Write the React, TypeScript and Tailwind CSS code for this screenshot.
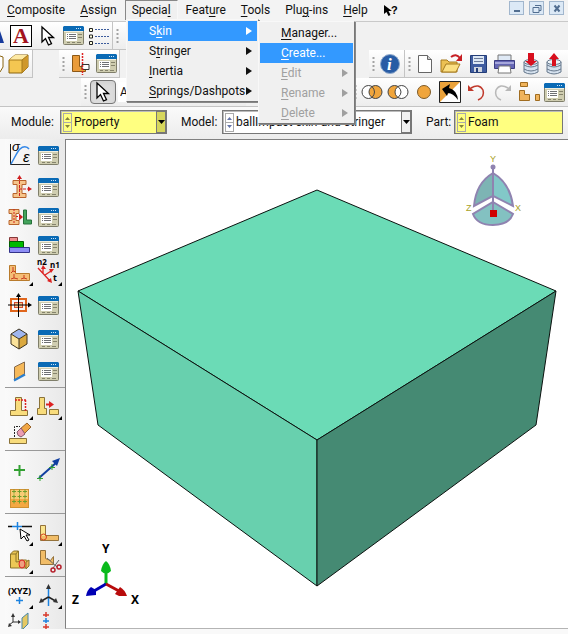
import React from "react";
import clsx from "clsx";

const menus = ["_Composite", "_Assign", "Specia_l", "Feat_ure", "_Tools", "Plu_g-ins", "_Help"];

const specialItems = ["S_kin", "S_tringer", "_Inertia", "_Springs/Dashpots"];

const skinItems = [
  { label: "_Manager...", disabled: false, sub: false },
  { label: "_Create...", disabled: false, sub: false },
  { label: "_Edit", disabled: true, sub: true },
  { label: "_Rename", disabled: true, sub: true },
  { label: "_Delete", disabled: true, sub: true },
];

// "_" marks the letter that is underlined
function Mnemonic({ text }: { text: string }) {
  const i = text.indexOf("_");
  return (
    <span className="whitespace-pre">
      {text.slice(0, i)}
      <span className="underline underline-offset-2">{text[i + 1]}</span>
      {text.slice(i + 2)}
    </span>
  );
}

function Icon({ w = 24, h = 24, children }: { w?: number; h?: number; children: React.ReactNode }) {
  return (
    <svg width={w} height={h} viewBox={`0 0 ${w} ${h}`} className="shrink-0 overflow-visible" fill="none" aria-hidden="true">
      {children}
    </svg>
  );
}

function ToolButton({ label, className, children }: { label: string; className?: string; children: React.ReactNode }) {
  return (
    <button type="button" aria-label={label} className={clsx("flex shrink-0 items-center justify-center", className)}>
      {children}
    </button>
  );
}

function Grip() {
  return (
    <Icon w={3} h={16}>
      <path d="M1.500 1v15" stroke="#a3a3a3" strokeWidth="2" strokeDasharray="2 2" />
    </Icon>
  );
}

const ManagerIcon = () => (
  <Icon w={21} h={19}>
    <rect x=".5" y="1.500" width="20" height="17" rx="1" fill="#cfcdb0" stroke="#7f7e6a" />
    <path d="M1 0h19l1 1v4H0V1z" fill="#0a6ab5" />
    <path d="M13 2.500h1m1 0h1m1 0h1" stroke="#cfe4f6" />
    <path d="M1 5.500h19" stroke="#efeee0" />
    <rect x="3" y="7" width="11" height="8" fill="#fff" />
    <path d="M4 8.500h1m1 0h7M4 10.500h1m1 0h7M4 12.500h1m1 0h7" stroke="#6e7075" />
    <path d="M15 8.500h4m-4 3h4M4 16.500h3m2 0h3m2 0h4" stroke="#85836c" />
  </Icon>
);

const CursorIcon = () => (
  <Icon w={14} h={20}>
    <path d="M1 1v15l3.500-3.500L7.500 19l3-1.300-3-6.200h5z" fill="#fff" stroke="#000" strokeWidth="1.300" />
  </Icon>
);

const Corner = () => <path d="M25 25v-4l-4 4z" fill="#000" />;

const CubeIcon = () => (
  <Icon w={21} h={20}>
    <path d="M1 6l6-5h13v12l-6 6H1z" fill="#f4c651" stroke="#8a6410" />
    <path d="M1 6l6-5h13l-6 5z" fill="#fde9a4" />
    <path d="M14 6l6-5v12l-6 6z" fill="#cf982b" />
    <path d="M1 6h13l6-5M14 6v13" stroke="#a67a1c" />
  </Icon>
);

const toolRows = [
  {
    h: "h-8",
    tools: [
      [
        "Create Material",
        <Icon key="i">
          <path d="M2.500 1v20.500H22" stroke="#222" />
          <path d="M3 21C7 14 9 9 12 6s7-3 9 0" stroke="#3488e8" strokeWidth="1.500" />
          <text x="4" y="8" className="fill-black font-['Liberation_Sans',sans-serif] text-[13px] italic">σ</text>
          <text x="15" y="19" className="fill-black font-['Liberation_Sans',sans-serif] text-[15px] italic">ε</text>
        </Icon>,
      ],
      ["Material Manager", <ManagerIcon key="i" />],
    ],
  },
  {
    h: "h-8",
    tools: [
      [
        "Create Section",
        <Icon key="i">
          <path d="M5 5.500h13v4h-4v9h4v4H5v-4h4v-9H5z" fill="#f6c58b" stroke="#b8622b" />
          <path d="M11.500 21V3M11 14h11" stroke="#d02020" strokeDasharray="3 1" />
          <path d="M9 4l2.500-4L14 4zM20 11.500l4 2.500-4 2.500z" fill="#d02020" />
        </Icon>,
      ],
      ["Section Manager", <ManagerIcon key="i" />],
    ],
  },
  {
    h: "h-7",
    tools: [
      [
        "Assign Section",
        <Icon key="i">
          <path d="M1 4.500h10v4H8v7h3v4H1v-4h3v-7H1z" fill="#f6c58b" stroke="#b8622b" />
          <path d="M6 4v15M8 11.500h4" stroke="#d02020" strokeDasharray="2 1" />
          <path d="M11 8.500l4 3.500-4 3.500z" fill="#d02020" />
          <path d="M15.500 5h3v10h5v4h-8z" fill="#43a45c" stroke="#27713b" />
        </Icon>,
      ],
      ["Section Assignment Manager", <ManagerIcon key="i" />],
    ],
  },
  {
    h: "h-7",
    tools: [
      [
        "Create Composite Layup",
        <Icon key="i">
          <path d="M1.500 4.500h8v4h-8z" fill="#ee8d8d" stroke="#843838" />
          <path d="M1.500 8.500h14v6h-14z" fill="#00b900" stroke="#006000" />
          <path d="M1.500 14.500h20v5h-20z" fill="#8d8df5" stroke="#33338a" />
        </Icon>,
      ],
      ["Composite Layup Manager", <ManagerIcon key="i" />],
    ],
  },
  {
    h: "h-7",
    tools: [
      [
        "Assign Material Orientation",
        <Icon key="i">
          <path d="M1.500 4.500h6v8h14v7h-20z" fill="#f5bd75" stroke="#b97b2c" />
          <path d="M5 10V6m0 4l-2 2m2-2l3 1M6 17v-4m0 4l-3 1m3-1l4 1M16 17v-3m0 3l-3 1m3-1l3 1" stroke="#c83b20" />
          <Corner />
        </Icon>,
      ],
      [
        "Assign Beam Orientation",
        <Icon key="i">
          <path d="M1 7l12 13M6 12V6M8 14l6-4" stroke="#d22" strokeWidth="1.300" />
          <path d="M15 22l-1-5-4 3zM4 8l2-4 3 4zM12 8l5 0-3 4z" fill="#d22" />
          <text x="0" y="4" className="fill-black font-['Noto_Sans',sans-serif] text-[8px] font-bold">n2</text>
          <text x="13" y="7" className="fill-black font-['Noto_Sans',sans-serif] text-[8px] font-bold">n1</text>
          <text x="16" y="20" className="fill-black font-['Noto_Sans',sans-serif] text-[9px] font-bold">t</text>
          <Corner />
        </Icon>,
      ],
    ],
  },
  {
    h: "h-9",
    tools: [
      [
        "Create Reference Orientation",
        <Icon key="i">
          <rect x="3" y="6" width="15" height="12" stroke="#e0661d" strokeWidth="2" />
          <rect x="6.500" y="9.500" width="8" height="5" fill="#f7c58d" stroke="#d04b2d" />
          <path d="M0 12h22M10.500 2v22" stroke="#000" />
          <path d="M8 4l2.500-4L13 4zM20 9.500l4 2.500-4 2.500z" fill="#000" />
        </Icon>,
      ],
      ["Orientation Manager", <ManagerIcon key="i" />],
    ],
  },
  {
    h: "h-8",
    tools: [
      [
        "Create Solid Skin",
        <Icon key="i">
          <path d="M3 7l8-5 8 5-8 5z" fill="#9fb6ef" />
          <path d="M3 7l8 5v10l-8-5z" fill="#fae29a" />
          <path d="M19 7l-8 5v10l8-5z" fill="#dba93f" />
          <path d="M3 7l8-5 8 5v10l-8 5-8-5zM3 7l8 5 8-5M11 12v10" stroke="#3c3320" />
        </Icon>,
      ],
      ["Skin Manager", <ManagerIcon key="i" />],
    ],
  },
  {
    h: "h-8",
    tools: [
      [
        "Create Shell",
        <Icon key="i">
          <path d="M6.500 8l10-5v12l-10 6z" fill="#f6b95a" stroke="#85694b" />
          <path d="M6 21.500l11-6" stroke="#2a7fcf" strokeWidth="2" />
        </Icon>,
      ],
      ["Shell Manager", <ManagerIcon key="i" />],
    ],
  },
] as { h: string; tools: [string, React.ReactNode][] }[];

const toolSections = [
  [
    [
      "Extend Part",
      <Icon key="i">
        <path d="M7.500 2.500h6v13h6v5h-17v-5h5z" fill="#f8dc7c" stroke="#8a733a" />
        <path d="M7 5h12M17.500 5v11" stroke="#d22" strokeDasharray="2 1" strokeWidth="1.500" />
        <Corner />
      </Icon>,
    ],
    [
      "Offset Faces",
      <Icon key="i">
        <path d="M2.500 2.500h5v11h2v6h-9v-6h2zM12.500 14.500h9v5h-9z" fill="#f8dc7c" stroke="#8a733a" />
        <path d="M9 9.500h4" stroke="#d22" strokeWidth="2" />
        <path d="M12 6l5 3.500-5 3.500z" fill="#d22" />
        <Corner />
      </Icon>,
    ],
    [
      "Remove Faces",
      <Icon key="i">
        <path d="M6.500 14V3.500H12" stroke="#222" strokeDasharray="2 1" />
        <path d="M1.500 15.500h17v5h-17z" fill="#f8dc7c" stroke="#8a733a" />
        <path d="M12 6l7-6 4 4-8 8z" fill="#f0a645" stroke="#97622b" />
        <path d="M9 9l4-4 4 6-4 3q-4-1-4-5z" fill="#ec9db3" stroke="#85596b" />
      </Icon>,
    ],
  ],
  [
    [
      "Create Datum Point",
      <Icon key="i">
        <path d="M6 12h11M11.500 7v11" stroke="#32a032" strokeWidth="2" />
      </Icon>,
    ],
    [
      "Create Datum Axis",
      <Icon key="i">
        <path d="M2 20L20 4" stroke="#103fa0" strokeWidth="2" />
        <path d="M23 0l-8 3 5 5z" fill="#103fa0" />
        <path d="M0 20.500h6M3 17v6M12 9.500h6M15 6v6" stroke="#32a032" />
      </Icon>,
    ],
    [
      "Partition Cell",
      <Icon key="i">
        <rect x="2.500" y="3.500" width="18" height="18" fill="#f4a843" stroke="#cf9133" />
        <path d="M3 4h17v9H3z" fill="#f8cc74" />
        <path d="M4 5.500h4m1.500 0h4m1.500 0h4M4 10.500h4m1.500 0h4m1.500 0h4M4 15.500h4m1.500 0h4m1.500 0h4M6 3.500v4m0 1v4m0 1v4M11.500 3.500v4m0 1v4m0 1v4M17 3.500v4m0 1v4m0 1v4" stroke="#6f9d2c" />
      </Icon>,
    ],
  ],
  [
    [
      "Partition Edge",
      <Icon key="i">
        <path d="M0 5.500h4m10 0h10" stroke="#111" strokeWidth="1.500" />
        <path d="M4 5.500h10M9.500 1v8" stroke="#1c83e0" strokeWidth="1.500" />
        <path d="M12 8l1 10 3-3 3 5 2-1-3-5h4z" fill="#fff" stroke="#000" />
        <Corner />
      </Icon>,
    ],
    [
      "Partition Face",
      <Icon key="i">
        <path d="M3.500 4.500h5v10h13v5h-18z" fill="#f1bd68" stroke="#94723b" />
        <path d="M4 5h4v10H4z" fill="#fbe58d" />
        <circle cx="6.500" cy="16" r="3" stroke="#d64020" />
        <Corner />
      </Icon>,
    ],
    [
      "Partition Solid",
      <Icon key="i">
        <path d="M2.500 5l3-3h5v9h8l2 2-3 6h-15z" fill="#ecc855" stroke="#8a7328" />
        <path d="M8 5v8l8-1M8 5l2-3M3 5h5" stroke="#8a7328" />
        <ellipse cx="14" cy="15" rx="3" ry="4" fill="#f0a080" stroke="#d22" />
        <path d="M18 13l3-2v6l-3 3z" fill="#f0b35a" stroke="#8a7328" />
        <Corner />
      </Icon>,
    ],
    [
      "Geometry Edit",
      <Icon key="i">
        <path d="M3.500 1.500h5v8l5 2 3-4v8h-13z" fill="#f1bd68" stroke="#94723b" />
        <path d="M10 9l10 9M22 11l-6 8" stroke="#666" />
        <circle cx="16" cy="21" r="2" stroke="#b5202c" strokeWidth="1.500" />
        <circle cx="22" cy="18" r="2" stroke="#b5202c" strokeWidth="1.500" />
      </Icon>,
    ],
  ],
  [
    [
      "Datum Point by Coordinates",
      <Icon key="i">
        <text x="0" y="10" className="fill-black font-['Noto_Sans',sans-serif] text-[9px] font-bold">(XYZ)</text>
        <path d="M8 16.500h7M11.500 13v7" stroke="#1c83e0" strokeWidth="1.500" />
        <Corner />
      </Icon>,
    ],
    [
      "Datum Coordinate System",
      <Icon key="i">
        <path d="M11.500 2v20" stroke="#1c83e0" strokeWidth="1.500" />
        <path d="M11.500 13l-7 4M11.500 13l7 4" stroke="#222" strokeWidth="1.500" />
        <path d="M9 5l2.500-5L14 5zM2 19l2-5 3 4zM21 19l-2-5-3 4z" fill="#333" />
        <Corner />
      </Icon>,
    ],
    [
      "Datum Plane",
      <Icon key="i">
        <path d="M5 3v7l-4 3m4-3h7" stroke="#333" />
        <path d="M3 5l2-4 2 4zM10 8l3 2-3 2zM0 15l1-4 3 3z" fill="#333" />
        <path d="M14 6l6-5v11l-6 6z" fill="#e5c862" stroke="#4686a8" />
      </Icon>,
    ],
    [
      "Datum Midpoint",
      <Icon key="i">
        <path d="M6 3h6M9 0v5M6 15h6M9 12v5" stroke="#d83a2c" strokeWidth="1.500" />
        <path d="M6 9h6M9 6v5" stroke="#1c83e0" strokeWidth="1.500" />
      </Icon>,
    ],
  ],
] as [string, React.ReactNode][][];

function MenuBar() {
  return (
    <header className="flex h-[21px] items-start bg-[#f3f3f3]">
      <nav className="flex h-full grow items-start gap-px">
        {menus.map((m) => (
          <button
            key={m}
            type="button"
            className={clsx(
              "h-5 border-x border-t px-[6px] leading-[19px]",
              m === "Specia_l" ? "border-[#888] border-r-[#f8f8f8] bg-[#f0f0f0]" : "border-transparent"
            )}
          >
            <Mnemonic text={m} />
          </button>
        ))}
        <ToolButton label="Context Help" className="ml-1 h-5 w-5">
          <Icon w={14} h={13}>
            <path d="M1 1v9l2.500-2 2 4 2-1-2-4H9z" fill="#000" />
            <text x="8" y="10" className="fill-black font-['Liberation_Sans',sans-serif] text-[11px] font-bold">?</text>
          </Icon>
        </ToolButton>
      </nav>
      <div className="flex gap-[5px] pt-[1px] pr-1">
        {["M4 9h6", "M5 3.500h6v5H9M3 5.500h6v5H3z", "M4.500 3.500l5 6m0-6l-5 6"].map((d, i) => (
          <button
            key={d}
            type="button"
            aria-label={["Minimize", "Restore", "Close"][i]}
            className="flex h-[14px] w-[15px] items-center justify-center border border-[#a1b6cd] bg-[#dce9f6]"
          >
            <Icon w={14} h={13}>
              <path d={d} stroke="#526e90" strokeWidth={i === 1 ? 1 : 2} />
            </Icon>
          </button>
        ))}
      </div>
    </header>
  );
}

const Db = ({ up }: { up?: boolean }) => (
  <Icon w={16} h={22}>
    <path d="M1 9v10q7 4 14 0V9" fill="#d5e1ee" stroke="#66788c" />
    <ellipse cx="8" cy="9" rx="7" ry="2.500" fill="#eef4fa" stroke="#66788c" />
    <path d="M1 12q7 4 14 0M1 16q7 4 14 0" stroke="#66788c" />
    <path d={up ? "M6 13V6H3l5-6 5 6h-3v7z" : "M5 0h6v8h3l-6 5-6-5h3z"} fill="#d80f1e" />
  </Icon>
);

const BAR = "flex items-center border-b border-[#c4c4c4] bg-linear-to-b from-white to-[#ededed]";

function Toolbars() {
  return (
    <div className="border-t border-[#c9c9c9] bg-[#f1f1f1]">
      <div className="flex h-7">
        <div className={clsx(BAR, "w-[113px] border-r")}>
          <ToolButton label="Text" className="w-[10px] justify-start">
            <Icon w={4} h={22}>
              <path d="M0 6l4 12H0z" fill="#173b9c" />
            </Icon>
          </ToolButton>
          <ToolButton label="Annotate" className="h-[22px] w-[22px] border border-black bg-white">
            <span className="font-['Liberation_Serif',serif] text-[22px] leading-5 font-bold text-[#a31420]">A</span>
          </ToolButton>
          <ToolButton label="Edit" className="ml-[9px]"><CursorIcon /></ToolButton>
          <ToolButton label="Annotation Manager" className="ml-2"><ManagerIcon /></ToolButton>
          <ToolButton label="Options" className="ml-[5px]">
            <Icon w={21} h={18}>
              <path d="M6 2.500h15M6 9.500h15M6 16.500h15" stroke="#3c5c9c" strokeDasharray="2 1" />
              <path d="M.5 1.500h3v3h-3zM.5 8h3v3h-3zM.5 14.500h3v3h-3z" fill="#ffd" stroke="#222" />
            </Icon>
          </ToolButton>
        </div>
        <div className={clsx(BAR, "pr-3 pl-[3px]")}><Grip /></div>
      </div>
      <div className="flex h-7 justify-between">
        <div className="flex">
          <div className={clsx(BAR, "w-[33px] border-r")}>
            <Icon w={4} h={20}>
              <path d="M0 2l3 1v10l-3 5" stroke="#8a6410" fill="#fff" />
            </Icon>
            <ToolButton label="Shaded" className="ml-1"><CubeIcon /></ToolButton>
          </div>
          <div className={clsx(BAR, "ml-[26px] w-[61px] border-r pl-[3px]")}>
            <Grip />
            <ToolButton label="Beam Profile" className="ml-[6px]">
              <Icon w={19} h={20}>
                <path d="M1.500 1.500h7v11h6v5h-13z" fill="#e99b3a" stroke="#8c5816" />
                <path d="M11 10.500h7v5h-7z" fill="#fff" stroke="#333" />
                <path d="M11.500 -1v22" stroke="#d22" strokeDasharray="2 1" strokeWidth="1.500" />
              </Icon>
            </ToolButton>
            <ToolButton label="Profile Manager" className="ml-[6px]"><ManagerIcon /></ToolButton>
          </div>
        </div>
        <div className={clsx(BAR, "w-[199px] pl-[3px]")}>
          <Grip />
          <ToolButton label="Information" className="ml-1">
            <Icon w={22} h={22}>
              <circle cx="11" cy="11" r="9.500" fill="#285ca5" stroke="#8fa9cb" />
              <text x="8" y="17" className="fill-white font-['Liberation_Serif',serif] text-[17px] font-bold italic">i</text>
            </Icon>
          </ToolButton>
          <span className="mx-[3px] h-full w-px bg-[#c4c4c4]" />
          <Grip />
          <div className="flex grow items-center justify-between pr-1.5 pl-1.5">
            <ToolButton label="New">
              <Icon w={16} h={20}>
                <path d="M1.500 1.500h9l4 4v13h-13z" fill="#fff" stroke="#666" />
                <path d="M10.500 1.500v4h4" fill="#ccc" stroke="#666" />
              </Icon>
            </ToolButton>
            <ToolButton label="Open">
              <Icon w={22} h={20}>
                <path d="M1 18V6h6l2 2h8v10z" fill="#ecc153" stroke="#a67a1f" />
                <path d="M2 18l4-8h14l-4 8z" fill="#fbdf82" stroke="#a67a1f" />
                <path d="M11 3q5-4 9 1" stroke="#c71f24" strokeWidth="2" />
                <path d="M22 0v7h-6z" fill="#c71f24" />
              </Icon>
            </ToolButton>
            <ToolButton label="Save">
              <Icon w={17} h={18}>
                <path d="M.5.5h16v17H.5z" fill="#3f5ca0" stroke="#233d78" />
                <path d="M3 1h11v8H3z" fill="#dce7f4" />
                <path d="M4 3.500h9M4 6.500h9" stroke="#6d7c9a" />
                <path d="M4 12h8v5H4z" fill="#cfd5de" />
                <path d="M6 13h2v4H6z" fill="#233d78" />
              </Icon>
            </ToolButton>
            <ToolButton label="Print">
              <Icon w={21} h={20}>
                <path d="M4 1h13v7H4z" fill="#dfe9f5" stroke="#777" />
                <path d="M.5 6.500h20v8H.5z" fill="#6667b5" stroke="#3c3d83" />
                <path d="M1 8h19v2H1z" fill="#a6a7dc" />
                <path d="M5 12h11l1 7H4z" fill="#fff" stroke="#777" />
              </Icon>
            </ToolButton>
            <ToolButton label="Save Session"><Db /></ToolButton>
            <ToolButton label="Load Session"><Db up /></ToolButton>
          </div>
        </div>
      </div>
      <div className="flex h-[29px] justify-between border-b border-[#c4c4c4]">
        <div className="ml-[81px] flex items-center bg-linear-to-b from-white to-[#ededed] pl-[3px]">
          <Grip />
          <ToolButton label="Select" className="ml-[3px] h-6 w-[26px] rounded-sm border border-[#777] bg-[#dcdcdc] shadow-inner"><CursorIcon /></ToolButton>
          <select aria-label="Selection filter" className="ml-0.5 h-5 w-32 appearance-none bg-white pl-0.5">
            <option>All</option>
          </select>
        </div>
        <div className="flex w-[214px] items-center gap-1 bg-linear-to-b from-white to-[#ededed]">
          <Grip />
          <ToolButton label="Union">
            <Icon w={22} h={16}>
              <circle cx="7.500" cy="8" r="6.500" fill="#fff" stroke="#444" />
              <circle cx="14.500" cy="8" r="6.500" fill="#f0a53c" stroke="#444" />
              <path d="M11 2.500q5 5.500 0 11" stroke="#444" />
            </Icon>
          </ToolButton>
          <ToolButton label="Subtract">
            <Icon w={22} h={16}>
              <circle cx="7.500" cy="8" r="6.500" fill="#f0a53c" stroke="#444" />
              <circle cx="14.500" cy="8" r="6.500" fill="#fff" stroke="#444" />
              <path d="M11 2.500q6 5.500 0 11" stroke="#444" />
            </Icon>
          </ToolButton>
          <ToolButton label="Replace" className="ml-[3px]">
            <Icon w={16} h={16}>
              <circle cx="8" cy="8" r="6.500" fill="#f0a53c" stroke="#7c5a28" />
            </Icon>
          </ToolButton>
          <ToolButton label="Undo Display" className="ml-[3px]">
            <Icon w={22} h={22}>
              <path d="M.5.5h21v21H.5z" fill="#fff" stroke="#222" />
              <path d="M1 1h20L1 21z" fill="#eba23a" />
              <path d="M3 8l8-5-1 4q8 2 9 12-5-7-10-7l-1 3z" fill="#000" />
            </Icon>
          </ToolButton>
          <ToolButton label="Undo" className="ml-0.5">
            <Icon w={19} h={18}>
              <path d="M4 5q8-5 12 2 2 7-5 10" stroke="#c0392b" strokeWidth="1.500" />
              <path d="M1 2v6h6z" fill="#c0392b" />
            </Icon>
          </ToolButton>
          <ToolButton label="Redo" className="ml-[3px]">
            <Icon w={19} h={18}>
              <path d="M15 5Q7 0 3 7q-2 7 5 10" stroke="#b8b8b8" strokeWidth="1.500" />
              <path d="M18 2v6h-6z" fill="#b8b8b8" />
            </Icon>
          </ToolButton>
          <ToolButton label="Display Group" className="ml-0.5">
            <Icon w={22} h={20}>
              <path d="M2.500.5h7v4h-7zM1.500 8.500h5v4h5v6h-10zM17.500 12.500h4v6h-4z" fill="#f0b45c" stroke="#a06c20" />
            </Icon>
          </ToolButton>
          <ManagerIcon />
        </div>
      </div>
    </div>
  );
}

interface ContextSelectProps {
  label: string;
  value: string;
  labelWidth: string;
  className?: string;
  yellow?: boolean;
}

function ContextSelect({ label, value, labelWidth, className, yellow }: ContextSelectProps) {
  const id = `ctx-${label.toLowerCase()}`;
  return (
    <div className="flex items-center">
      <label htmlFor={id} className={labelWidth}>{label}:</label>
      <div className={clsx("flex h-6 items-center border border-[#777] shadow-[inset_1px_1px_#bbb]", yellow ? "bg-[#ffff80]" : "bg-white", className)}>
        <span className="mr-[2px] ml-[2px] flex h-[19px] w-[9px] items-center justify-center border border-[#aaa]">
          <Icon w={7} h={17}>
            <path d="M0 8.500h7" stroke="#aaa" />
            <path d="M1 6l2.500-3L6 6zM1 11l2.500 3L6 11z" fill={yellow ? "#84843c" : "#6474a8"} />
          </Icon>
        </span>
        <select id={id} className="h-full min-w-0 grow appearance-none bg-transparent">
          <option>{value}</option>
        </select>
        {label !== "Part" && (
          <span className={clsx("flex h-full w-[10px] items-center justify-center border border-[#777]", yellow ? "bg-[#d6d65c]" : "bg-[#f0f0f0]")}>
            <Icon w={7} h={4}>
              <path d="M0 0h7L3.500 4z" fill="#000" />
            </Icon>
          </span>
        )}
      </div>
    </div>
  );
}

function Toolbox() {
  return (
    <aside className="ml-[5px] h-[490px] w-[60px] shrink-0 overflow-hidden bg-linear-to-r from-[#fafafa] to-[#e9e9e9]">
      {toolRows.map((row, i) => (
        <div key={i} className={clsx("grid grid-cols-2 pr-[2px]", row.h)}>
          {row.tools.map(([label, icon]) => (
            <ToolButton key={label} label={label}>{icon}</ToolButton>
          ))}
        </div>
      ))}
      {toolSections.map((tools, i) => (
        <div key={i} className="h-[63px] border-t border-[#999] pt-[5px]">
          <div className="grid auto-rows-[28px] grid-cols-2 pr-[2px]">
            {tools.map(([label, icon]) => (
              <ToolButton key={label} label={label}>{icon}</ToolButton>
            ))}
          </div>
        </div>
      ))}
    </aside>
  );
}

function Viewport() {
  return (
    <main className="min-w-0 grow border-t border-b border-l border-[#808080] border-b-[#b4b4b4] bg-white">
      <svg viewBox="66 140 502 488" className="block w-full" fill="none" role="img" aria-label="Part viewport">
        <g stroke="#0b120f" strokeLinejoin="round">
          <path d="M317 190l239 101-239 149L78 291z" fill="#6bdbb6" />
          <path d="M78 291l239 149v146L98 425z" fill="#68d0ae" />
          <path d="M556 291L317 440v146l219-161z" fill="#458a73" />
        </g>

        {/* view compass */}
        <g stroke="#8f83b0" strokeWidth="2">
          <path d="M493 173q-17 10-19 33l19-10z" fill="#7db4b4" />
          <path d="M493 173q17 10 20 33l-20-10z" fill="#82c8c8" />
          <path d="M493 202l20 12q-4 11-20 11t-20-11z" fill="#83c1c1" />
          <path d="M493 167v44" />
        </g>
        <circle cx="493" cy="167" r="2.500" fill="#8f83b0" />
        <path d="M490 210h7v7h-7z" fill="#d00000" />
        <g className="fill-[#a8a11e] font-['Liberation_Sans',sans-serif] text-[9px]">
          <text x="490" y="162">Y</text>
          <text x="466" y="211">Z</text>
          <text x="515" y="211">X</text>
        </g>

        {/* axis triad */}
        <path d="M106 584v-12" stroke="#0aba1c" strokeWidth="3" />
        <path d="M101 571q1-7 5-10 4 3 5 10-5 5-10 0z" fill="#0aba1c" />
        <path d="M106 584l-12 7" stroke="#0000b4" strokeWidth="3" />
        <path d="M86 596q1-6 5-9l5 3v5z" fill="#0000b4" />
        <path d="M106 584l13 7" stroke="#b80c0c" strokeWidth="3" />
        <path d="M127 596q-2-6-7-9l-5 7 4 2z" fill="#b80c0c" />
        <g className="fill-black font-['Noto_Sans',sans-serif] text-[12px] font-bold">
          <text x="102" y="553">Y</text>
          <text x="72" y="604">Z</text>
          <text x="131" y="604">X</text>
        </g>
      </svg>
    </main>
  );
}

const MENU = "absolute border border-[#f8f8f8] border-r-[#777] border-b-[#777] bg-[#f0f0f0] px-px pt-px shadow-[1px_1px_#888]";
const MENU_ITEM = "flex h-5 w-full items-center justify-between pr-[5px] pl-[21px]";

export default function App() {
  return (
    <div className="relative min-h-screen overflow-hidden bg-[#f9f9f9] font-['Roboto','Open_Sans',sans-serif] text-[12px] text-[#111]">
      <MenuBar />
      <Toolbars />
      <div className="flex h-8 items-start gap-[14px] bg-linear-to-b from-[#fafafa] to-[#ececec] pt-[3px] pl-[11px]">
        <ContextSelect label="Module" value="Property" yellow labelWidth="w-[49px]" className="w-[107px]" />
        <ContextSelect label="Model" value="ballImpact-skin-and-stringer" labelWidth="w-[41px]" className="w-[190px]" />
        <ContextSelect label="Part" value="Foam" yellow labelWidth="w-[28px]" className="w-[109px]" />
      </div>
      <div className="flex items-start">
        <Toolbox />
        <Viewport />
      </div>

      <div role="menu" className={clsx(MENU, "top-[19px] left-[126px] w-[133px]")}>
        {specialItems.map((item, i) => (
          <button key={item} type="button" role="menuitem" className={clsx(MENU_ITEM, i === 0 && "bg-[#3399ff] text-white")}>
            <Mnemonic text={item} />
            <Icon w={6} h={8}>
              <path d="M0 0l6 4-6 4z" fill="currentColor" />
            </Icon>
          </button>
        ))}
      </div>
      <div role="menu" className={clsx(MENU, "top-[21px] left-[258px] w-[97px]")}>
        {skinItems.map((item, i) => (
          <button
            key={item.label}
            type="button"
            role="menuitem"
            disabled={item.disabled}
            className={clsx(MENU_ITEM, i === 1 && "bg-[#3399ff] text-white", item.disabled && "text-[#a0a0a0]")}
          >
            <Mnemonic text={item.label} />
            {item.sub && (
              <Icon w={6} h={8}>
                <path d="M0 0l6 4-6 4z" fill="currentColor" />
              </Icon>
            )}
          </button>
        ))}
      </div>
    </div>
  );
}
